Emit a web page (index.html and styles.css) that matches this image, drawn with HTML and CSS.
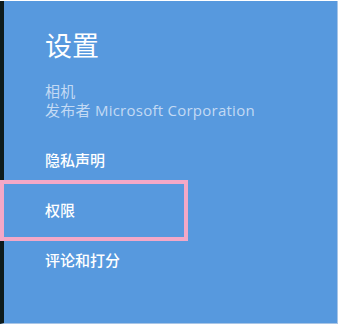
FILE: index.html
```html
<!DOCTYPE html>
<html lang="zh-CN">
<head>
<meta charset="utf-8">
<title>设置</title>
<link rel="stylesheet" href="styles.css">
</head>
<body>
<div class="pane">
  <h1 class="title">设置</h1>
  <div class="meta">
    <div class="meta-line">相机</div>
    <div class="meta-line">发布者 Microsoft Corporation</div>
  </div>
  <ul class="menu">
    <li class="menu-item">隐私声明</li>
    <li class="menu-item">权限</li>
    <li class="menu-item">评论和打分</li>
  </ul>
</div>
<div class="highlight"></div>
</body>
</html>
```
FILE: styles.css
```css
html, body {
  margin: 0;
  padding: 0;
  background: #ffffff;
}
body {
  position: relative;
  width: 339px;
  height: 327px;
  overflow: hidden;
  font-family: "Noto Sans CJK SC", "Open Sans", sans-serif;
}
.pane {
  margin-top: 1px;
  width: 338px;
  height: 323px;
  box-sizing: border-box;
  background: #5799de;
  border-left: 4px solid #0d1b1c;
  border-right: 1px solid #a8c5e6;
  border-bottom: 1px solid #a8c5e6;
  padding: 28px 0 0 41px;
  display: flex;
  flex-direction: column;
}
.title {
  margin: 0;
  font-size: 27px;
  line-height: 31px;
  font-weight: 400;
  color: #ffffff;
}
.meta {
  margin-top: 22px;
  color: #c3daf4;
  font-size: 15px;
  line-height: 19px;
}
.meta-line {
  font-family: "Open Sans", "Noto Sans CJK SC", sans-serif;
  letter-spacing: 0.25px;
}
.menu {
  list-style: none;
  margin: 31px 0 0;
  padding: 0;
  display: flex;
  flex-direction: column;
  gap: 32px;
}
.menu-item {
  font-size: 15px;
  line-height: 18px;
  font-weight: 500;
  color: #ffffff;
}
.highlight {
  position: absolute;
  left: 0;
  top: 180px;
  width: 188px;
  height: 61px;
  box-sizing: border-box;
  border: 4px solid #f3a8c7;
}
```
